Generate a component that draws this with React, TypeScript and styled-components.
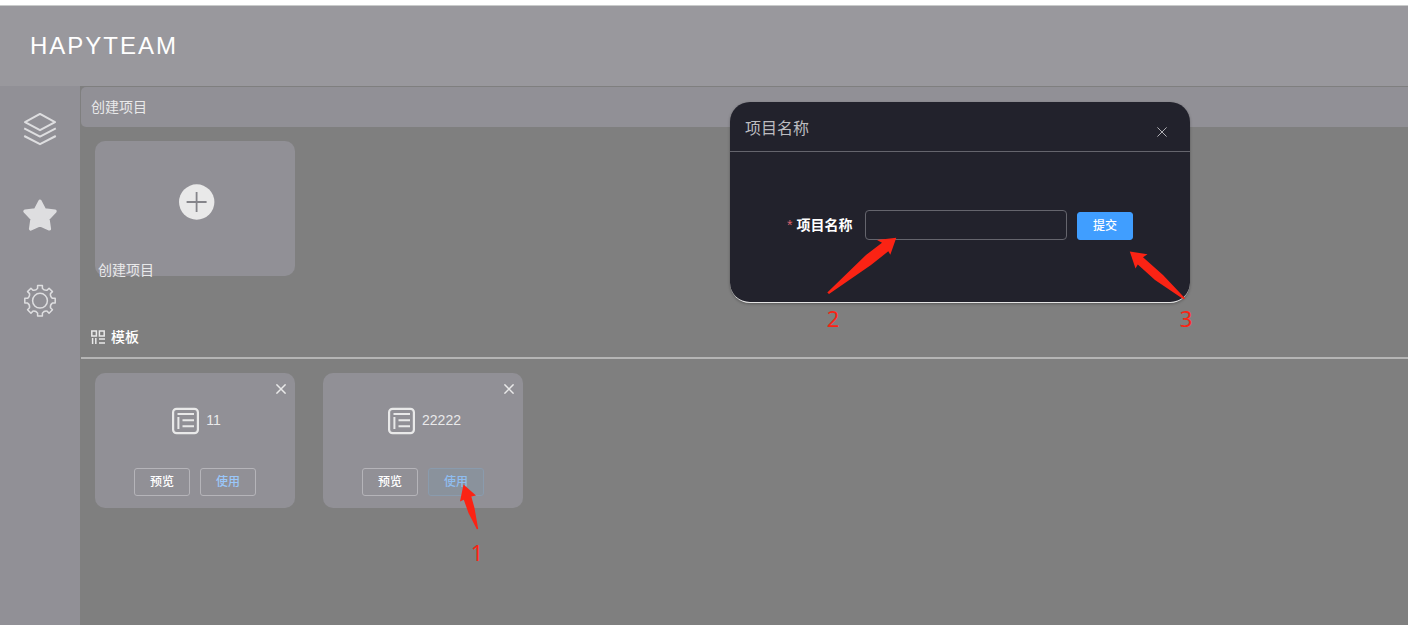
import React from "react";
import styled, { createGlobalStyle } from "styled-components";

const GlobalStyle = createGlobalStyle`
  * { box-sizing: border-box; }
  body {
    margin: 0;
    overflow: hidden;
    background: #7f7f7f;
    font-family: "Liberation Sans", "Noto Sans CJK SC", sans-serif;
    color: #e9e9ea;
    font-size: 14px;
  }
  svg { display: block; flex: none; }
`;

const Page = styled.div`
  position: relative;
  height: 625px;
  display: flex;
  flex-direction: column;
  overflow: hidden;
  border-top: 5px solid #fff;
`;

const Header = styled.header`
  height: 81px;
  flex: none;
  display: flex;
  align-items: center;
  padding: 0 30px;
  border-top: 1px solid #c9cbcb;
  background: #99989d;
  color: #fff;
  font-size: 24px;
  letter-spacing: 2px;
`;

const Body = styled.div`
  flex: 1;
  display: flex;
  min-height: 0;
`;

const Sidebar = styled.nav`
  width: 80px;
  flex: none;
  display: flex;
  flex-direction: column;
  align-items: center;
  gap: 50px;
  padding-top: 25px;
  background: #919096;
`;

const Main = styled.main`
  flex: 1;
  min-width: 0;
  padding: 1px 0 0 1px;
  background: #7f7f7f;
`;

const TitleBar = styled.div`
  height: 40px;
  padding-left: 10px;
  line-height: 41px;
  border-radius: 5px 0 0 5px;
  background: #919096;
`;

const Card = styled.section`
  width: 200px;
  height: 135px;
  flex: none;
  border-radius: 10px;
  background: #919096;
`;

const CreateCard = styled(Card)`
  display: flex;
  flex-direction: column;
  align-items: center;
  margin: 14px 0 0 14px;
  padding: 43px 0 0 3px;
`;

const CreateLabel = styled.span`
  align-self: flex-start;
  margin-top: 40px;
  line-height: 20px;
`;

const SectionTitle = styled.h2`
  display: flex;
  align-items: center;
  gap: 6px;
  height: 43px;
  margin: 40px 0 0;
  padding: 1px 0 0 10px;
  border-bottom: 2px solid #b5b5b5;
  color: #fff;
  font-size: 14px;
  font-weight: 500;

  span { line-height: 20px; padding-bottom: 1px; }
`;

const TemplateList = styled.div`
  display: flex;
  gap: 28px;
  padding: 14px;
`;

const TemplateCard = styled(Card)`
  display: flex;
  flex-direction: column;
  padding-top: 11px;
`;

const CloseRow = styled.div`
  display: flex;
  justify-content: flex-end;
  padding-right: 9px;
`;

const TemplateName = styled.div`
  display: flex;
  align-items: flex-start;
  justify-content: center;
  gap: 7px;
  height: 28px;
  margin-top: 13px;
  padding-left: 3px;
  line-height: 26px;
`;

const Actions = styled.div`
  display: flex;
  justify-content: center;
  gap: 10px;
  margin-top: 33px;
`;

const Button = styled.button<{ $tone: "plain" | "link" | "active" | "primary" }>`
  width: 56px;
  height: 28px;
  padding: 0;
  border: 1px solid
    ${({ $tone }) =>
      $tone === "primary" ? "#409eff" : $tone === "active" ? "#8a9bad" : "#b5b4b9"};
  border-radius: 3px;
  background: ${({ $tone }) =>
    $tone === "primary" ? "#409eff" : $tone === "active" ? "#8a929c" : "transparent"};
  color: ${({ $tone }) =>
    $tone === "link" ? "#9ac7fa" : $tone === "active" ? "#8fbdf0" : "#fff"};
  font: 500 12px/24px "Liberation Sans", "Noto Sans CJK SC", sans-serif;
`;

const Dialog = styled.div`
  position: absolute;
  left: 730px;
  top: 97px;
  width: 460px;
  height: 201px;
  overflow: hidden;
  border-bottom: 1px solid #e4e4e4;
  border-radius: 20px;
  background: #22222c;
  box-shadow: 0 1px 3px rgba(0, 0, 0, 0.3);
`;

const DialogHeader = styled.div`
  display: flex;
  justify-content: space-between;
  align-items: center;
  height: 50px;
  padding: 5px 23px 0 15px;
  border-bottom: 1px solid #65656d;
  color: #bcbcc0;
  font-size: 16px;

  span { line-height: 20px; }
  svg { margin-top: 5px; }
`;

const Form = styled.div`
  display: flex;
  align-items: center;
  height: 30px;
  margin: 58px 0 0 57px;
`;

const Label = styled.label`
  width: 78px;
  color: #fff;
  font-weight: 700;
  line-height: 28px;
`;

const Required = styled.span`
  margin-right: 4px;
  color: #d9606a;
  font-weight: 400;
`;

const Field = styled.input`
  width: 202px;
  height: 30px;
  margin-right: 10px;
  border: 1px solid #65656d;
  border-radius: 4px;
  background: transparent;
`;

const SubmitSlot = styled.div`
  display: flex;
  padding-top: 2px;
`;

const Annotations = styled.svg`
  position: absolute;
  left: 0;
  top: -5px;
  pointer-events: none;

  text {
    font: 22px "Noto Sans", sans-serif;
    text-anchor: middle;
  }
`;

const LayersIcon = () => (
  <svg width="36" height="36" viewBox="0 0 36 36" fill="none" stroke="#dedee0" strokeWidth="2" strokeLinejoin="round">
    <path d="M18 2.9 33 11.2 18 19.2 3 11.2Z" />
    <path d="M2.2 17.4 18 25.6 33.8 17.4M2.2 25 18 33.2 33.8 25" />
  </svg>
);

const StarIcon = () => (
  <svg width="36" height="36" viewBox="0 0 36 36" fill="#dedee0" stroke="#dedee0" strokeWidth="3.4" strokeLinejoin="round">
    <path d="M18 4.2 22.6 13 33 14.3 25.9 21.7 27.4 31.9 18 27.6 8.6 31.9 10.1 21.7 3 14.3 13.4 13Z" />
  </svg>
);

const point = (radius: number, degrees: number) => {
  const a = (degrees * Math.PI) / 180;
  return `${(18 + radius * Math.sin(a)).toFixed(2)} ${(17.7 - radius * Math.cos(a)).toFixed(2)}`;
};

const gearOutline =
  Array.from({ length: 8 }, (_, i) => {
    const a = i * 45;
    return `${i ? "L" : "M"}${point(12.6, a - 11)}L${point(15.4, a - 9)}L${point(15.4, a + 9)}L${point(12.6, a + 11)}Q${point(10.8, a + 22.5)} ${point(12.6, a + 34)}`;
  }).join("") + "Z";

const GearIcon = () => (
  <svg width="36" height="36" viewBox="0 0 36 36" fill="none" stroke="#dedee0" strokeWidth="1.5" strokeLinejoin="round">
    <path d={gearOutline} />
    <circle cx="18" cy="17.7" r="7.4" />
  </svg>
);

const AddIcon = () => (
  <svg width="36" height="36" viewBox="0 0 36 36">
    <circle cx="17.7" cy="18" r="17.7" fill="#e9e9e9" />
    <path d="M17.6 8V28M7.6 18H27.6" stroke="#85858a" strokeWidth="1.8" />
  </svg>
);

const GridIcon = () => (
  <svg width="14" height="14" viewBox="0 0 14 14" fill="none" stroke="#e9e9e9" strokeWidth="1.5">
    <path d="M.8.9H5.4V6H.8ZM8.4.9H13.2V6H8.4ZM1.6 8V14M4.8 8V14M8 9H14M8 12.9H14" />
  </svg>
);

const DocumentIcon = () => (
  <svg width="27" height="28" viewBox="0 0 27 28" fill="none" stroke="#e9e9e9">
    <rect x="1.1" y="1.8" width="24.8" height="24.4" rx="3.5" strokeWidth="2.2" />
    <path d="M5.5 7H22M6.4 10V22M10.5 13.3H22M10.5 19.3H22" strokeWidth="2" />
  </svg>
);

const CloseIcon = ({ color = "#e9e9e9", thickness = 1.5, size = 10 }) => (
  <svg width={size} height={size} viewBox="0 0 10 10" stroke={color} strokeWidth={thickness}>
    <path d="M.4.4 9.6 9.6M9.6.4.4 9.6" />
  </svg>
);

const templates = [
  { name: "11", active: false },
  { name: "22222", active: true },
];

export default function App() {
  return (
    <Page>
      <GlobalStyle />
      <Header>HAPYTEAM</Header>
      <Body>
        <Sidebar>
          <LayersIcon />
          <StarIcon />
          <GearIcon />
        </Sidebar>
        <Main>
          <TitleBar>创建项目</TitleBar>
          <CreateCard>
            <AddIcon />
            <CreateLabel>创建项目</CreateLabel>
          </CreateCard>
          <SectionTitle>
            <GridIcon />
            <span>模板</span>
          </SectionTitle>
          <TemplateList>
            {templates.map(({ name, active }) => (
              <TemplateCard key={name}>
                <CloseRow>
                  <CloseIcon />
                </CloseRow>
                <TemplateName>
                  <DocumentIcon />
                  <span>{name}</span>
                </TemplateName>
                <Actions>
                  <Button $tone="plain">预览</Button>
                  <Button $tone={active ? "active" : "link"}>使用</Button>
                </Actions>
              </TemplateCard>
            ))}
          </TemplateList>
        </Main>
      </Body>
      <Dialog>
        <DialogHeader>
          <span>项目名称</span>
          <CloseIcon color="#b0b0b5" thickness={1} size={10} />
        </DialogHeader>
        <Form>
          <Label>
            <Required>*</Required>项目名称
          </Label>
          <Field />
          <SubmitSlot>
            <Button $tone="primary">提交</Button>
          </SubmitSlot>
        </Form>
      </Dialog>
      <Annotations width="1408" height="625" fill="#fb2314">
        <path d="M896.3 237.8 877 240 882 242.8 866 255 827.3 292.5 829 294 871 265 888.3 251.3 890.3 254.8Z" />
        <path d="M1129.8 251.5 1147.5 254.3 1143 257.3 1163 275 1185 298.3 1183.5 299.3 1155 280 1137.8 264.5 1135.5 268.5Z" />
        <path d="M463.5 484.5 476 495.5 471.3 496.5 474.5 508 478.2 529 476.8 529.3 468.5 513 463.8 499.8 460 501.5Z" />
        <text x="477" y="561">1</text>
        <text x="833" y="327">2</text>
        <text x="1186" y="327">3</text>
      </Annotations>
    </Page>
  );
}
